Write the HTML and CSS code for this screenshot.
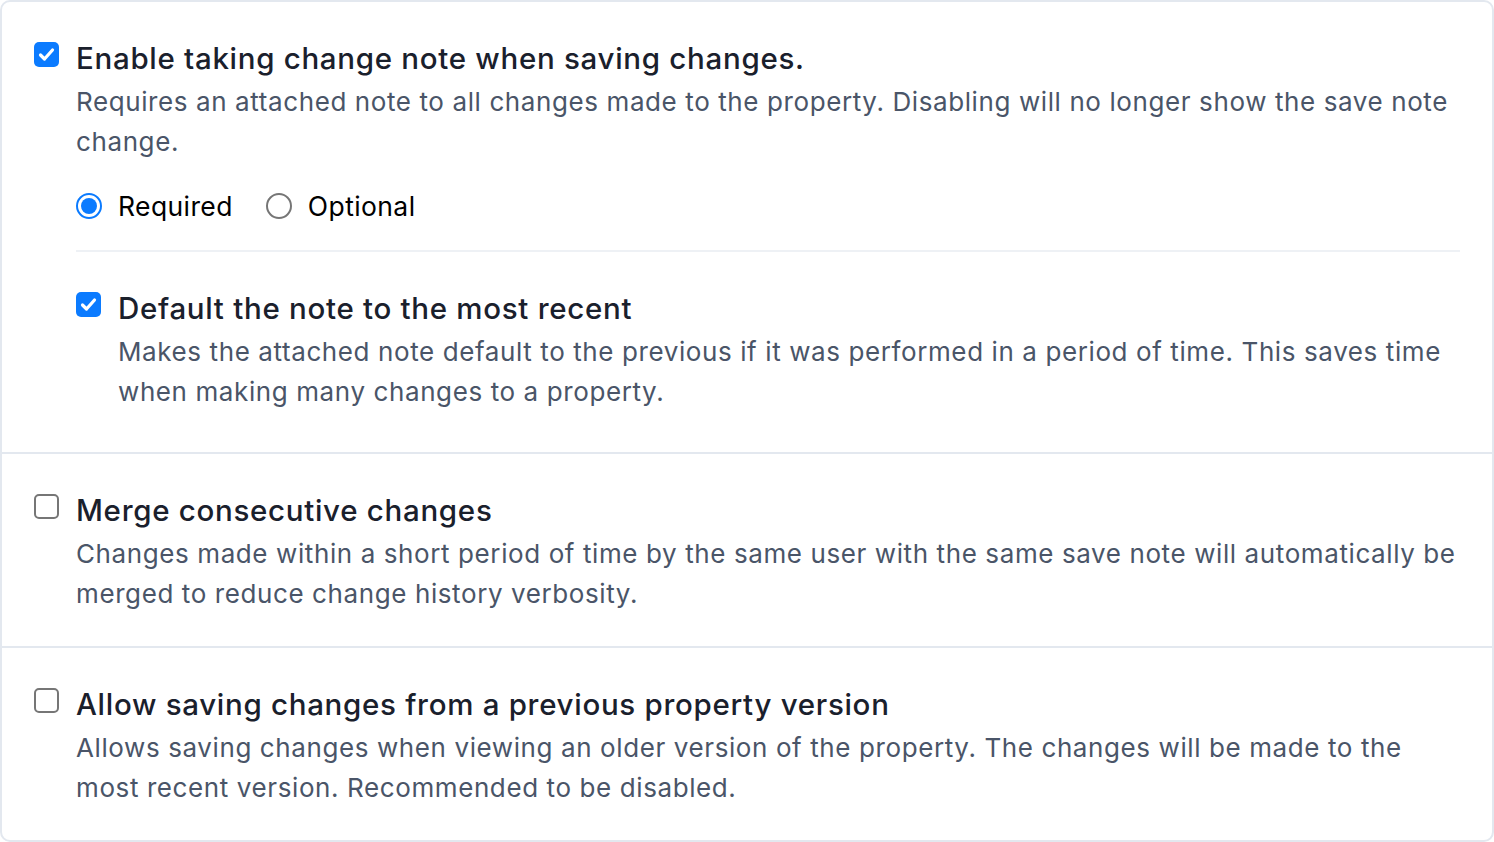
FILE: index.html
```html
<!DOCTYPE html>
<html lang="en">
<head>
<meta charset="utf-8">
<title>Change settings</title>
<link rel="stylesheet" href="styles.css">
</head>
<body>
<div class="card">
  <section class="section section-first">
    <div class="item">
      <span class="check checked"><svg viewBox="0 0 25 25" width="25" height="25"><path d="M6.5 13 L10.5 17 L18.5 8" fill="none" stroke="#fff" stroke-width="3.2" stroke-linecap="round" stroke-linejoin="round"/></svg></span>
      <div class="body">
        <div class="title">Enable taking change note when saving changes.</div>
        <div class="desc">Requires an attached note to all changes made to the property. Disabling will no longer show the save note change.</div>
        <div class="radios">
          <label class="radio-opt"><span class="radio on"></span><span class="radio-label">Required</span></label>
          <label class="radio-opt"><span class="radio"></span><span class="radio-label">Optional</span></label>
        </div>
        <div class="inner-divider"></div>
        <div class="item nested">
          <span class="check checked"><svg viewBox="0 0 25 25" width="25" height="25"><path d="M6.5 13 L10.5 17 L18.5 8" fill="none" stroke="#fff" stroke-width="3.2" stroke-linecap="round" stroke-linejoin="round"/></svg></span>
          <div class="body">
            <div class="title">Default the note to the most recent</div>
            <div class="desc">Makes the attached note default to the previous if it was performed in a period of time. This saves time when making many changes to a property.</div>
          </div>
        </div>
      </div>
    </div>
  </section>
  <section class="section">
    <div class="item">
      <span class="check"></span>
      <div class="body">
        <div class="title">Merge consecutive changes</div>
        <div class="desc">Changes made within a short period of time by the same user with the same save note will automatically be merged to reduce change history verbosity.</div>
      </div>
    </div>
  </section>
  <section class="section">
    <div class="item">
      <span class="check"></span>
      <div class="body">
        <div class="title">Allow saving changes from a previous property version</div>
        <div class="desc">Allows saving changes when viewing an older version of the property. The changes will be made to the most recent version. Recommended to be disabled.</div>
      </div>
    </div>
  </section>
</div>
</body>
</html>
```

FILE: styles.css
```css
* { box-sizing: border-box; }
html, body { margin: 0; padding: 0; background: #fff; }
body { font-family: Inter, "Noto Sans", "Liberation Sans", sans-serif; }

.card {
  width: 100%;
  height: 842px;
  border: 2px solid #e3e8ef;
  border-radius: 10px;
  overflow: hidden;
}

.section {
  padding: 36px 32px 32px 32px;
  border-top: 2px solid #e3e8ef;
}
.section:first-child { border-top: none; padding-bottom: 40px; }

.item { display: flex; gap: 17px; align-items: flex-start; }
.body { flex: 1; min-width: 0; }

.check {
  flex: none;
  width: 25px;
  height: 25px;
  margin-top: 4px;
  border-radius: 5px;
  border: 2px solid #767676;
  background: #fff;
  display: block;
}
.check.checked {
  border: none;
  background: #0b7bff;
}
.check svg { display: block; }

.title {
  font-size: 29.5px;
  line-height: 40px;
  font-weight: 500;
  color: #1a202c;
  letter-spacing: 0.7px;
}
.desc {
  margin-top: 4px;
  font-size: 26px;
  line-height: 40px;
  color: #4a5568;
  letter-spacing: 0.6px;
}

.radios {
  margin-top: 24px;
  display: flex;
  gap: 33px;
  height: 40px;
  align-items: center;
}
.radio-opt { display: flex; align-items: center; gap: 16px; }
.radio {
  width: 26px;
  height: 26px;
  border-radius: 50%;
  border: 2px solid #767676;
  background: #fff;
  display: block;
  position: relative;
}
.radio.on {
  border: 2.5px solid #0b7bff;
}
.radio.on::after {
  content: "";
  position: absolute;
  left: 3px; top: 3px; right: 3px; bottom: 3px;
  border-radius: 50%;
  background: #0b7bff;
}
.radio-label {
  font-size: 26.5px;
  line-height: 40px;
  color: #000;
  letter-spacing: 0.4px;
}

.inner-divider {
  margin-top: 24px;
  height: 2px;
  background: #eef1f5;
}

.nested { margin-top: 36px; }
```
